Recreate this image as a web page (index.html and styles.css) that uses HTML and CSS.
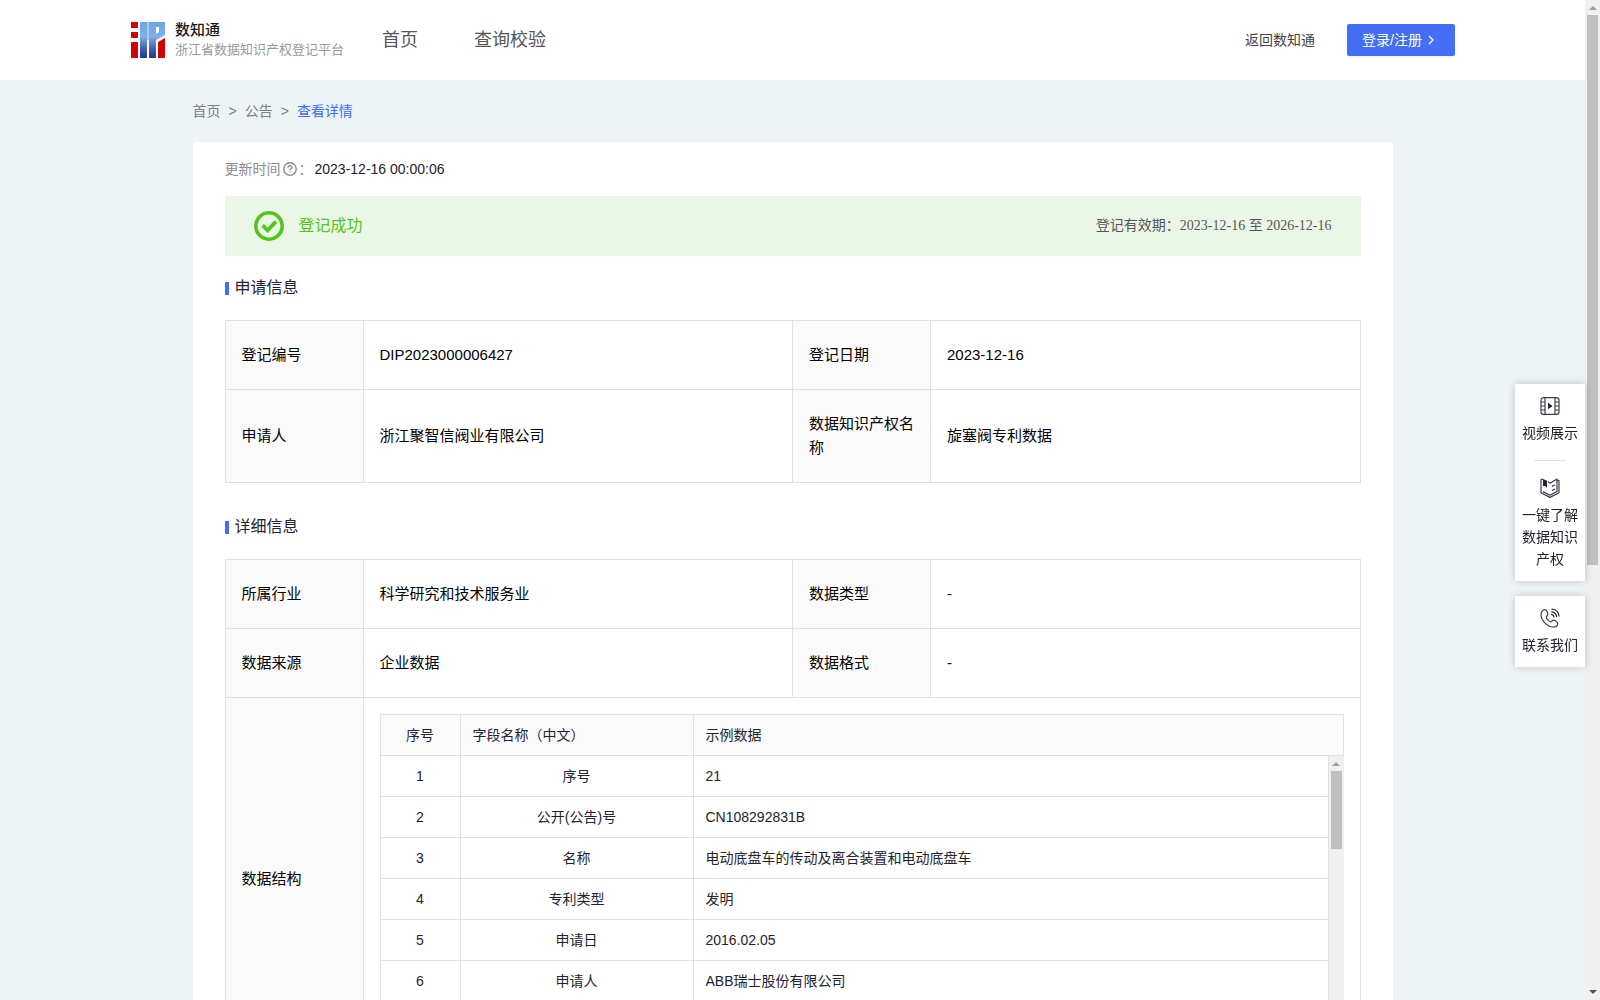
FILE: index.html
```html
<!DOCTYPE html>
<html lang="zh-CN">
<head>
  <meta charset="UTF-8">
  <meta name="viewport" content="width=device-width, initial-scale=1.0">
  <title>浙江省数据知识产权登记平台</title>
  <link rel="stylesheet" href="styles.css">
</head>
<body>
  <div class="page">
    <header class="header">
      <a class="logo" href="#">
        <svg width="34" height="36" viewBox="0 0 34 36">
          <defs>
            <linearGradient id="blue" x1="0" y1="0" x2="0" y2="36" gradientUnits="userSpaceOnUse">
              <stop offset="0" stop-color="#6fa6e4"/>
              <stop offset="0.4" stop-color="#7fb0e6"/>
              <stop offset="0.75" stop-color="#3c5fac"/>
              <stop offset="1" stop-color="#263c85"/>
            </linearGradient>
          </defs>
          <path fill="#d20505" d="M0 0h7v6H0zM0 10h7v6H0zM0 20h7v16H0zM27 20l7-4v20h-7z"/>
          <path fill="url(#blue)" d="M9 0h7v36H9z"/>
          <path fill="url(#blue)" fill-rule="evenodd" d="M18 0h16v13l-9 5v18h-7zM25 5v7l3-2V5z"/>
          <path fill="#a9cbf0" d="M16 0h2v18h-2z"/>
        </svg>
        <span class="logo-text">
          <strong>数知通</strong>
          <small>浙江省数据知识产权登记平台</small>
        </span>
      </a>
      <nav class="nav">
        <a href="#">首页</a>
        <a href="#">查询校验</a>
      </nav>
      <a class="back" href="#">返回数知通</a>
      <button class="login" type="button">登录/注册
        <svg width="14" height="14" viewBox="0 0 14 14"><path d="M5 3l4 4-4 4" fill="none" stroke="#fff" stroke-width="1.4"/></svg>
      </button>
    </header>

    <main class="main">
      <div class="breadcrumb">
        <a href="#">首页</a><span>&gt;</span><a href="#">公告</a><span>&gt;</span><a class="current" href="#">查看详情</a>
      </div>

      <div class="card">
        <div class="update">
          <span class="label">更新时间</span>
          <svg width="14" height="14" viewBox="0 0 14 14" fill="none" stroke="#8c8c91" stroke-width="1.4"><circle cx="7" cy="7" r="6.2"/><path d="M5.1 5.6c0-2.4 3.8-2.4 3.8 0 0 1.2-1.9 1.2-1.9 2.6M7 9.4v1.2"/></svg>
          <span class="label">：</span>
          <span>2023-12-16 00:00:06</span>
        </div>

        <div class="result">
          <svg width="30" height="30" viewBox="0 0 30 30" fill="none" stroke="#52c41a"><circle cx="15" cy="15" r="13.2" stroke-width="3.6"/><path d="M8.600 14.400l5 5 8.400-8.800" stroke-width="3.8"/></svg>
          <span class="result-name">登记成功</span>
          <span class="period">登记有效期：2023-12-16 至 2026-12-16</span>
        </div>

        <h2>申请信息</h2>
        <table class="info">
          <colgroup><col class="c-label"><col><col class="c-label"><col></colgroup>
          <tr><th>登记编号</th><td>DIP2023000006427</td><th>登记日期</th><td>2023-12-16</td></tr>
          <tr><th>申请人</th><td>浙江聚智信阀业有限公司</td><th>数据知识产权名称</th><td>旋塞阀专利数据</td></tr>
        </table>

        <h2>详细信息</h2>
        <table class="info">
          <colgroup><col class="c-label"><col><col class="c-label"><col></colgroup>
          <tr><th>所属行业</th><td>科学研究和技术服务业</td><th>数据类型</th><td>-</td></tr>
          <tr><th>数据来源</th><td>企业数据</td><th>数据格式</th><td>-</td></tr>
          <tr>
            <th>数据结构</th>
            <td class="nested" colspan="3">
              <table class="fields">
                <colgroup><col class="c-no"><col class="c-name"><col></colgroup>
                <tr><th class="center">序号</th><th>字段名称（中文）</th><th>示例数据</th></tr>
              </table>
              <div class="fields-body">
                <table class="fields">
                  <colgroup><col class="c-no"><col class="c-name"><col></colgroup>
                  <tr><td>1</td><td>序号</td><td>21</td></tr>
                  <tr><td>2</td><td>公开(公告)号</td><td>CN108292831B</td></tr>
                  <tr><td>3</td><td>名称</td><td>电动底盘车的传动及离合装置和电动底盘车</td></tr>
                  <tr><td>4</td><td>专利类型</td><td>发明</td></tr>
                  <tr><td>5</td><td>申请日</td><td>2016.02.05</td></tr>
                  <tr><td>6</td><td>申请人</td><td>ABB瑞士股份有限公司</td></tr>
                </table>
                <div class="scrollbar">
                  <i class="up"></i>
                  <div class="thumb thumb-small"></div>
                  <i class="down"></i>
                </div>
              </div>
            </td>
          </tr>
        </table>
      </div>
    </main>
  </div>

  <div class="scrollbar">
    <i class="up"></i>
    <div class="thumb"></div>
    <i class="down"></i>
  </div>

  <aside class="side">
    <div class="side-box">
      <a href="#">
        <svg width="20" height="20" viewBox="0 0 20 20" fill="none" stroke="#3c3c46" stroke-width="1.2"><rect x="1" y="1.6" width="18" height="16.8" rx="2.4"/><path d="M5 2v16M15 2v16M1 6h4M1 10h4M1 14h4M15 6h4M15 10h4M15 14h4"/><path d="M8 6.8l4.6 3.2L8 13.2z" fill="#23232f" stroke="none"/></svg>
        视频展示
      </a>
      <hr>
      <a href="#">
        <svg width="20" height="20" viewBox="0 0 20 20" fill="none" stroke="#3c3c46" stroke-width="1.2" stroke-linejoin="round"><path d="M10 5.200L8 3.800M3 1.200L1 1.600v13.200l9 4.600 9-4.600V2.600l-2-.4M10 5.200L17 1v12.400l-7 3.800-7-3.600M12 8.400l3-1.600M12 12.600l3-1.600"/><path d="M3 1l4 1.800v7L5.200 8 3 8z" fill="#23232f" stroke="none"/></svg>
        一键了解数据知识产权
      </a>
    </div>
    <div class="side-box">
      <a href="#">
        <svg width="20" height="20" viewBox="0 0 20 20" fill="none" stroke="#3c3c46" stroke-width="1.2" stroke-linecap="round" stroke-linejoin="round"><path d="M5.400 1.600C3.600 1.200 1 3 1 6.400c0 5.800 6.600 12.600 11.800 12.600 3.200 0 5-1.800 5-3.600 0-1.400-3.600-3.400-4.600-3.200-1.200.2-1.400 1.800-2.600 1.600-1.600-.4-4.200-3-4.400-4.600 0-1 1.600-1.400 1.600-2.600C7.800 5.400 6.800 1.800 5.400 1.600z"/><path d="M11.600 6.400c1.200.2 2.200 1.200 2.400 2.600M11.800 3.800c2.600.2 4.400 2 4.800 4.800M12 1.200c3.800.2 6.600 3 7 6.800" stroke="#23232f"/></svg>
        联系我们
      </a>
    </div>
  </aside>
</body>
</html>
```

FILE: styles.css
```css
* {
  box-sizing: border-box;
}
body {
  margin: 0;
  display: flex;
  height: 100vh;
  overflow: hidden;
  background: #eef3f6;
  color: #23232f;
  font: 14px/22px "Liberation Sans", "Noto Sans CJK SC", sans-serif;
}
a {
  color: inherit;
  text-decoration: none;
}
svg {
  flex: none;
}
.page {
  flex: 1;
  min-width: 0;
  overflow: hidden;
}

/* header */
.header {
  display: flex;
  align-items: center;
  height: 80px;
  padding: 0 130px 0 131px;
  background: #fff;
}
.logo {
  display: flex;
  align-items: center;
  gap: 10px;
}
.logo-text {
  display: flex;
  flex-direction: column;
}
.logo-text strong {
  font-size: 15px;
  line-height: 20px;
  font-weight: 500;
  color: #1a1a1a;
}
.logo-text small {
  font-size: 13px;
  line-height: 20px;
  color: #999;
}
.nav {
  display: flex;
  gap: 56px;
  margin-left: 38px;
  font-size: 18px;
  color: #555;
}
.back {
  margin-left: auto;
  color: #444;
}
.login {
  display: flex;
  align-items: center;
  gap: 2px;
  width: 108px;
  height: 32px;
  margin-left: 32px;
  padding: 0 15px;
  border: none;
  border-radius: 2px;
  background: #446ef5;
  box-shadow: 0 2px 0 rgba(0, 0, 0, 0.04);
  color: #fff;
  font: inherit;
  white-space: nowrap;
  cursor: pointer;
}

/* content */
.main {
  max-width: 1200px;
  margin: 0 auto;
}
.breadcrumb {
  display: flex;
  gap: 8px;
  padding: 20px 0;
  color: #808080;
}
.breadcrumb .current {
  color: #3f6df5;
}
.card {
  padding: 16px 32px 32px;
  border-radius: 4px;
  background: #fff;
}
.update {
  display: flex;
  align-items: center;
  gap: 2px;
}
.update .label {
  color: #8c8c91;
}
.result {
  display: flex;
  align-items: center;
  height: 60px;
  margin-top: 16px;
  padding: 0 29px;
  background: #ebf7e6;
}
.result-name {
  margin-left: 15px;
  font-size: 16px;
  color: #52c41a;
}
.period {
  margin-left: auto;
  font-family: "Liberation Serif", "Noto Sans CJK SC", serif;
  color: #555;
}
h2 {
  display: flex;
  align-items: center;
  gap: 6px;
  margin: 20px 0;
  font-size: 16px;
  line-height: 24px;
  font-weight: 400;
}
h2::before {
  content: "";
  width: 4px;
  height: 13px;
  background: #446ef5;
}
.info + h2 {
  margin-top: 32px;
}

/* tables */
table {
  width: 100%;
  border-collapse: collapse;
  table-layout: fixed;
}
th, td {
  border: 1px solid #e1e1e1;
  font-weight: 400;
  text-align: left;
}
th {
  background: #fafafa;
}
.info > tbody > tr > th,
.info > tbody > tr > td {
  padding: 22px 16px;
  font-size: 15px;
  line-height: 24px;
  color: #000;
}
.c-label {
  width: 138px;
}
.info > tbody > tr > .nested {
  padding: 16px;
}
.fields th,
.fields td {
  padding: 9px 12px;
  font-size: 14px;
  line-height: 22px;
  color: #23232f;
}
.c-no {
  width: 80px;
}
.c-name {
  width: 233px;
}
.fields .center,
.fields td:nth-child(1),
.fields td:nth-child(2) {
  text-align: center;
}
.fields-body {
  display: flex;
  align-items: flex-start;
  height: 287px;
  overflow: hidden;
}
.fields-body .fields {
  flex: 1;
  width: auto;
}
.fields-body tr:first-child td {
  border-top: none;
}

/* scrollbars */
.scrollbar {
  display: flex;
  flex-direction: column;
  align-items: center;
  flex: none;
  width: 15px;
  height: 100%;
  background: #f0f0f0;
}
.up, .down {
  border: 4px solid transparent;
}
.up {
  margin: 6px 0 5px;
  border-top: none;
  border-bottom-color: #a0a0a0;
}
.down {
  margin: auto 0 6px;
  border-bottom: none;
  border-top-color: #505050;
}
.thumb {
  width: 11px;
  height: 55%;
  background: #c0c0c0;
}
.thumb-small {
  height: 78px;
}

/* floating side menu */
.side {
  position: fixed;
  top: 384px;
  right: 15px;
  display: flex;
  flex-direction: column;
  gap: 15px;
  width: 70px;
}
.side-box {
  padding: 12px 7px 11px;
  background: #fff;
  box-shadow: 0 0 8px rgba(0, 0, 0, 0.2);
}
.side-box a {
  display: flex;
  flex-direction: column;
  align-items: center;
  gap: 6px;
  text-align: center;
}
.side-box hr {
  width: 32px;
  height: 1px;
  margin: 16px auto 17px;
  border: none;
  background: #e1e1e1;
}
```
